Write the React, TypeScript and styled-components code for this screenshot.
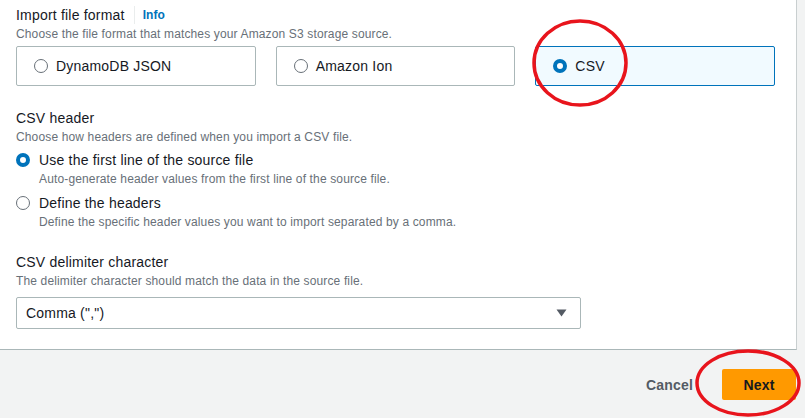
import React from "react";
import styled, { createGlobalStyle } from "styled-components";

const Global = createGlobalStyle`
  html, body { margin: 0; padding: 0; background: #f2f3f3; }
  body {
    font-family: "Liberation Sans", Arial, sans-serif;
    color: #16191f;
    -webkit-font-smoothing: antialiased;
  }
  * { box-sizing: border-box; }
`;

const Page = styled.div`
  position: relative;
  width: 805px;
  height: 418px;
  overflow: hidden;
  display: flex;
  flex-direction: column;
`;

const Panel = styled.section`
  background: #ffffff;
  width: 797px;
  padding: 4px 21px 20px 16px;
  border-right: 1px solid #c9cfd0;
  border-bottom: 1px solid #aab7b8;
  display: flex;
  flex-direction: column;
`;

const Field = styled.div<{ $gap?: number }>`
  display: flex;
  flex-direction: column;
  margin-top: ${(p) => p.$gap ?? 0}px;
`;

const LabelRow = styled.div`
  display: flex;
  align-items: center;
  height: 22px;
`;

const Label = styled.span`
  font-size: 14px;
  line-height: 22px;
  letter-spacing: 0.2px;
  color: #16191f;
`;

const Divider = styled.span`
  width: 1px;
  height: 18px;
  background: #eaeded;
  margin: 0 8px 0 9px;
`;

const InfoLink = styled.a`
  font-size: 12px;
  font-weight: 700;
  color: #0073bb;
  text-decoration: none;
  line-height: 16px;
  letter-spacing: 0.1px;
`;

const Desc = styled.div<{ $indent?: number }>`
  font-size: 12px;
  line-height: 16px;
  letter-spacing: 0.14px;
  color: #687078;
  padding-left: ${(p) => p.$indent ?? 0}px;
`;

const Tiles = styled.div`
  display: grid;
  grid-template-columns: repeat(3, 1fr);
  gap: 20px;
  margin-top: 4px;
`;

const Tile = styled.div<{ $selected?: boolean }>`
  height: 40px;
  display: flex;
  align-items: center;
  gap: 8px;
  padding-left: 17px;
  border: 1px solid ${(p) => (p.$selected ? "#0073bb" : "#aab7b8")};
  background: ${(p) => (p.$selected ? "#f1faff" : "#ffffff")};
  border-radius: 2px;
  font-size: 14px;
  letter-spacing: 0.2px;
  color: #16191f;
`;

const Radio = styled.span<{ $checked?: boolean }>`
  flex: none;
  width: 14px;
  height: 14px;
  border-radius: 50%;
  background: #ffffff;
  border: ${(p) => (p.$checked ? "4px solid #0073bb" : "1.5px solid #687078")};
`;

const Option = styled.div<{ $gap: number }>`
  display: flex;
  flex-direction: column;
  margin-top: ${(p) => p.$gap}px;
`;

const OptionRow = styled.div`
  display: flex;
  align-items: center;
  gap: 9px;
  height: 22px;
  font-size: 14px;
  letter-spacing: 0.2px;
  color: #16191f;
`;

const Select = styled.div`
  margin-top: 8px;
  width: 565px;
  height: 32px;
  border: 1px solid #aab7b8;
  border-radius: 2px;
  display: flex;
  align-items: center;
  justify-content: space-between;
  padding: 0 13px 0 9px;
  font-size: 14px;
  letter-spacing: 0.2px;
  color: #16191f;
`;

const Footer = styled.footer`
  display: flex;
  justify-content: flex-end;
  align-items: center;
  gap: 29px;
  padding: 19px 9px 0 0;
`;

const CancelButton = styled.button`
  background: none;
  border: none;
  padding: 0;
  font-family: inherit;
  font-size: 14px;
  font-weight: 700;
  letter-spacing: 0.2px;
  color: #545b64;
  cursor: pointer;
`;

const PrimaryButton = styled.button`
  width: 74px;
  height: 31px;
  background: #ff9900;
  border: none;
  border-radius: 2px;
  font-family: inherit;
  font-size: 14px;
  font-weight: 700;
  letter-spacing: 0.2px;
  color: #16191f;
  cursor: pointer;
`;

const Annotations = styled.svg`
  position: absolute;
  left: 0;
  top: 0;
  pointer-events: none;
`;

const Caret = () => (
  <svg width="11" height="8" viewBox="0 0 11 8">
    <path d="M0.5 0.5 L10.5 0.5 L5.5 7.5 Z" fill="#545b64" />
  </svg>
);

export default function App() {
  return (
    <Page>
      <Global />
      <Panel>
        <Field>
          <LabelRow>
            <Label>Import file format</Label>
            <Divider />
            <InfoLink>Info</InfoLink>
          </LabelRow>
          <Desc>Choose the file format that matches your Amazon S3 storage source.</Desc>
          <Tiles>
            <Tile>
              <Radio />
              DynamoDB JSON
            </Tile>
            <Tile>
              <Radio />
              Amazon Ion
            </Tile>
            <Tile $selected>
              <Radio $checked />
              CSV
            </Tile>
          </Tiles>
        </Field>

        <Field $gap={21}>
          <LabelRow>
            <Label>CSV header</Label>
          </LabelRow>
          <Desc>Choose how headers are defined when you import a CSV file.</Desc>
          <Option $gap={4}>
            <OptionRow>
              <Radio $checked />
              Use the first line of the source file
            </OptionRow>
            <Desc $indent={23}>Auto-generate header values from the first line of the source file.</Desc>
          </Option>
          <Option $gap={5}>
            <OptionRow>
              <Radio />
              Define the headers
            </OptionRow>
            <Desc $indent={23}>Define the specific header values you want to import separated by a comma.</Desc>
          </Option>
        </Field>

        <Field $gap={21}>
          <LabelRow>
            <Label>CSV delimiter character</Label>
          </LabelRow>
          <Desc>The delimiter character should match the data in the source file.</Desc>
          <Select>
            <span>Comma (",")</span>
            <Caret />
          </Select>
        </Field>
      </Panel>
      <Footer>
        <CancelButton>Cancel</CancelButton>
        <PrimaryButton>Next</PrimaryButton>
      </Footer>
      <Annotations width="805" height="418" viewBox="0 0 805 418">
        <ellipse cx="580" cy="63" rx="46" ry="42" fill="none" stroke="#e8141c" strokeWidth="3.5" />
        <ellipse cx="748" cy="383" rx="51" ry="32" fill="none" stroke="#e8141c" strokeWidth="3.5" />
      </Annotations>
    </Page>
  );
}
